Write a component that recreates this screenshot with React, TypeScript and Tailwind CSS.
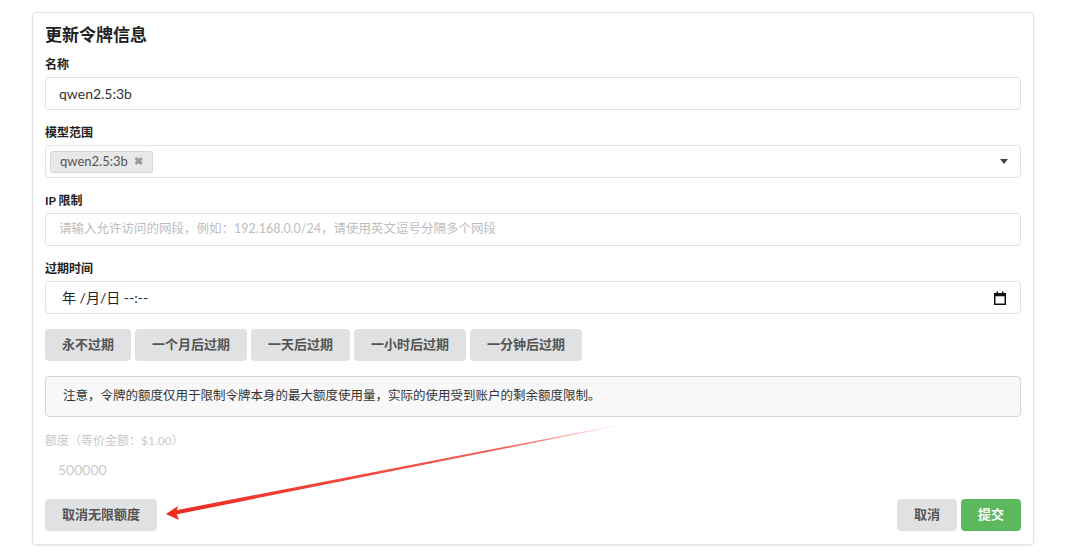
import React from "react";

const font = { fontFamily: 'Lato, "Noto Sans CJK SC", "Noto Sans", sans-serif' };

function Label({ children, faint }: { children: React.ReactNode; faint?: boolean }) {
  return (
    <div className={`h-[16px] leading-[16px] text-[12px] mb-[4px] text-[#222] ${faint ? "opacity-25 font-normal" : "font-bold"}`}>
      {children}
    </div>
  );
}

function Btn({ children, className = "bg-[#e0e1e2] text-[#555]" }: { children: React.ReactNode; className?: string }) {
  return (
    <div className={`h-[32px] px-[17px] flex items-center justify-center rounded-[4px] text-[13px] font-bold whitespace-nowrap ${className}`}>
      {children}
    </div>
  );
}

export default function App() {
  return (
    <div className="relative w-[1080px] h-[558px] bg-white overflow-hidden" style={font}>
      <div className="absolute left-[32px] top-[12px] w-[1002px] h-[533px] rounded-[4px] border border-[#e3e3e3] bg-white shadow-[0_1px_2px_rgba(0,0,0,0.08)] px-[12px] pt-[12px]">
        <div className="h-[20px] leading-[20px] text-[17px] font-bold text-[#222] mb-[12px]">更新令牌信息</div>

        <div className="flex flex-col gap-[15px]">
          <div>
            <Label>名称</Label>
            <div className="h-[33px] rounded-[4px] border border-[#e2e2e2] flex items-center px-[13px] text-[14px] text-[#333]">qwen2.5:3b</div>
          </div>
          <div>
            <Label>模型范围</Label>
            <div className="h-[33px] rounded-[4px] border border-[#e2e2e2] flex items-center pl-[4px] pr-[12px]">
              <div className="h-[22px] flex items-center gap-[6px] rounded-[3px] bg-[#e8e8e8] border border-[#d6d6d6] px-[9px] text-[13px] text-[#555]">
                <span>qwen2.5:3b</span>
                <span className="text-[11px] text-[#999] font-bold">✖</span>
              </div>
              <div className="flex-1" />
              <svg width="8" height="5" viewBox="0 0 8 5"><path d="M0 0h8L4 5z" fill="#444" /></svg>
            </div>
          </div>
          <div>
            <Label>IP 限制</Label>
            <div className="h-[33px] rounded-[4px] border border-[#e2e2e2] flex items-center px-[13px] text-[12.5px] text-[#bdbdbd]">
              请输入允许访问的网段，例如：192.168.0.0/24，请使用英文逗号分隔多个网段
            </div>
          </div>
          <div>
            <Label>过期时间</Label>
            <div className="h-[33px] rounded-[4px] border border-[#e2e2e2] flex items-center pl-[16px] pr-[14px] text-[14px] text-[#222]">
              <span>年 /月/日 --:--</span>
              <div className="flex-1" />
              <svg width="12" height="14" viewBox="0 0 12 14">
                <rect x="0.75" y="2.75" width="10.5" height="10.5" fill="none" stroke="#111" strokeWidth="1.5" />
                <rect x="0.75" y="2.75" width="10.5" height="2.5" fill="#111" />
                <rect x="2.5" y="0.5" width="1.5" height="2.5" fill="#111" />
                <rect x="8" y="0.5" width="1.5" height="2.5" fill="#111" />
              </svg>
            </div>
          </div>

          <div className="flex gap-[4px]">
            <Btn>永不过期</Btn>
            <Btn>一个月后过期</Btn>
            <Btn>一天后过期</Btn>
            <Btn>一小时后过期</Btn>
            <Btn>一分钟后过期</Btn>
          </div>

          <div className="h-[41px] rounded-[4px] bg-[#f8f8f9] border border-[#d4d4d5] flex items-center px-[17px] text-[12.5px] text-[#333]">
            注意，令牌的额度仅用于限制令牌本身的最大额度使用量，实际的使用受到账户的剩余额度限制。
          </div>

          <div className="mt-[1px]">
            <Label faint>额度（等价金额：$1.00）</Label>
            <div className="h-[33px] rounded-[4px] flex items-center px-[13px] text-[14px] text-[#222] opacity-25">500000</div>
          </div>
        </div>

        <div className="flex mt-[13px]">
          <Btn>取消无限额度</Btn>
          <div className="flex-1" />
          <div className="mr-[4px]"><Btn>取消</Btn></div>
          <Btn className="bg-[#5cb85c] text-white">提交</Btn>
        </div>
      </div>

      <svg className="absolute left-0 top-0 pointer-events-none" width="1080" height="558" viewBox="0 0 1080 558">
        <defs>
          <linearGradient id="ag" x1="620" y1="425" x2="166" y2="513" gradientUnits="userSpaceOnUse">
            <stop offset="0" stopColor="#ef3a2f" stopOpacity="0" />
            <stop offset="0.25" stopColor="#ef3a2f" stopOpacity="0.8" />
            <stop offset="1" stopColor="#ec2a20" stopOpacity="1" />
          </linearGradient>
        </defs>
        <polygon points="620,424.6 620,425.4 176,514.5 175,510.5" fill="url(#ag)" />
        <polygon points="166,514 178,506 176,512.5 179,520" fill="#ec2a20" />
      </svg>
    </div>
  );
}
